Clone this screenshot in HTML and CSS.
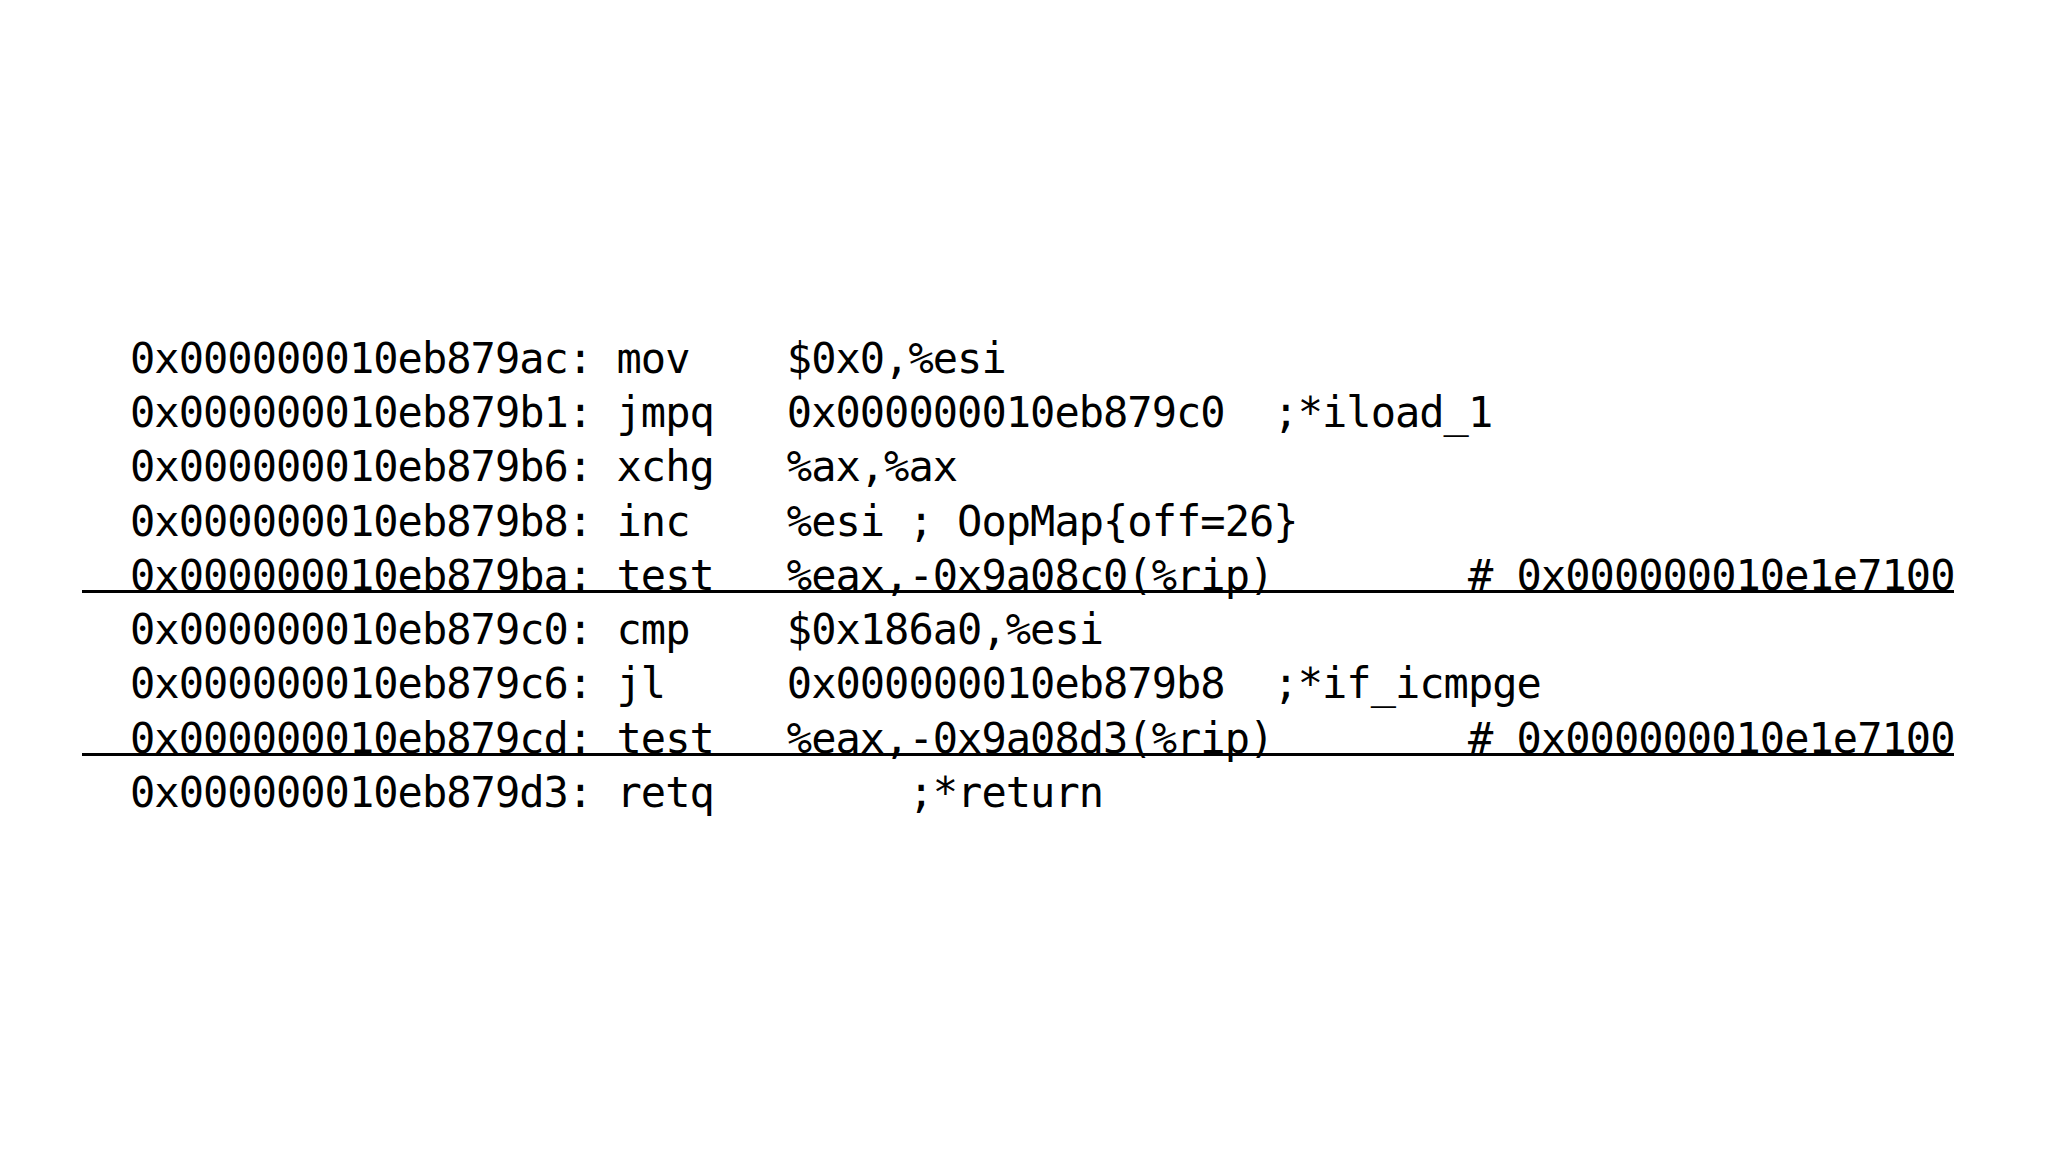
FILE: index.html
```html
<!DOCTYPE html>
<html lang="en">
<head>
<meta charset="utf-8">
<title>Disassembly</title>
<link rel="stylesheet" href="styles.css">
</head>
<body>
<main class="slide">
  <div class="listing">
    <div class="row">0x000000010eb879ac: mov    $0x0,%esi</div>
    <div class="row">0x000000010eb879b1: jmpq   0x000000010eb879c0  ;*iload_1</div>
    <div class="row">0x000000010eb879b6: xchg   %ax,%ax</div>
    <div class="row">0x000000010eb879b8: inc    %esi ; OopMap{off=26}</div>
    <div class="row row-rule">0x000000010eb879ba: test   %eax,-0x9a08c0(%rip)        # 0x000000010e1e7100</div>
    <div class="row">0x000000010eb879c0: cmp    $0x186a0,%esi</div>
    <div class="row">0x000000010eb879c6: jl     0x000000010eb879b8  ;*if_icmpge</div>
    <div class="row row-rule">0x000000010eb879cd: test   %eax,-0x9a08d3(%rip)        # 0x000000010e1e7100</div>
    <div class="row">0x000000010eb879d3: retq        ;*return</div>
  </div>
</main>
</body>
</html>
```
FILE: styles.css
```css
html, body {
  margin: 0;
  padding: 0;
  background: #ffffff;
}

.slide {
  height: 1152px;
  width: 2048px;
  display: flex;
  flex-direction: column;
  justify-content: center;
  padding-left: 130px;
  box-sizing: border-box;
}

.listing {
  display: flex;
  flex-direction: column;
  align-items: flex-start;
  font-family: "DejaVu Sans Mono", "Liberation Mono", monospace;
  font-size: 42px;
  letter-spacing: -0.96px;
  line-height: 54.25px;
  color: #000000;
}

.row {
  white-space: pre;
  position: relative;
}

.row-rule::after {
  content: "";
  position: absolute;
  left: -48px;
  right: 0;
  top: 41px;
  height: 3px;
  background: #000000;
}
```
